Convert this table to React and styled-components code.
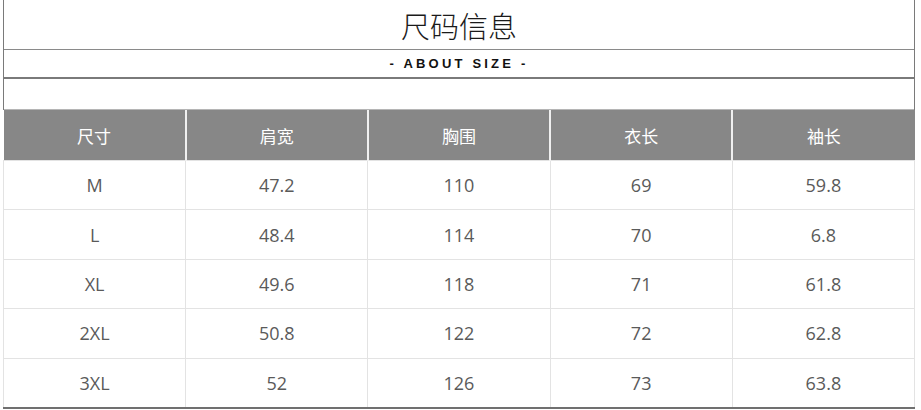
import React from "react";
import styled, { createGlobalStyle } from "styled-components";

const Global = createGlobalStyle`
  html, body { margin: 0; padding: 0; background: #fff; }
  body { font-family: "Open Sans", "Noto Sans CJK SC", sans-serif; }
`;

const Page = styled.div`
  padding-left: 3px;
  width: 912px;
`;

const Box = styled.div`
  border-left: 1px solid #7a7a7a;
  border-right: 1px solid #7a7a7a;
  display: flex;
  flex-direction: column;
`;

const Title = styled.div`
  height: 49px;
  display: flex;
  align-items: center;
  justify-content: center;
  font-family: "Noto Sans CJK SC", sans-serif;
  font-size: 29px;
  font-weight: 300;
  color: #1a1a1a;
  border-bottom: 1px solid #8a8a8a;
`;

const Sub = styled.div`
  height: 27px;
  display: flex;
  align-items: center;
  justify-content: center;
  font-family: "Liberation Sans", Arial, sans-serif;
  font-size: 13px;
  font-weight: 700;
  letter-spacing: 3.2px;
  color: #111;
  border-bottom: 2px solid #7a7a7a;
`;

const Blank = styled.div`
  height: 30px;
  border-bottom: 1px solid #b5b5b5;
`;

const Table = styled.table`
  width: 912px;
  border-collapse: collapse;
  table-layout: fixed;
  border-bottom: 2px solid #707070;
`;

const Th = styled.th`
  height: 50px;
  padding: 0;
  background: #878787;
  color: #fff;
  font-family: "Noto Sans CJK SC", sans-serif;
  font-weight: 400;
  font-size: 17px;
  border-left: 2px solid #f0f0f0;
  &:first-child { border-left: none; }
`;

const Td = styled.td`
  height: 48.4px;
  padding: 0;
  text-align: center;
  color: #5a5a5a;
  font-size: 18px;
  border: 1px solid #e3e3e3;
`;

const head = ["尺寸", "肩宽", "胸围", "衣长", "袖长"];
const rows = [
  ["M", "47.2", "110", "69", "59.8"],
  ["L", "48.4", "114", "70", "6.8"],
  ["XL", "49.6", "118", "71", "61.8"],
  ["2XL", "50.8", "122", "72", "62.8"],
  ["3XL", "52", "126", "73", "63.8"],
];

export default function App() {
  return (
    <Page>
      <Global />
      <Box>
        <Title>尺码信息</Title>
        <Sub>- ABOUT SIZE -</Sub>
        <Blank />
      </Box>
      <Table>
        <thead>
          <tr>
            {head.map((h) => (
              <Th key={h}>{h}</Th>
            ))}
          </tr>
        </thead>
        <tbody>
          {rows.map((r) => (
            <tr key={r[0]}>
              {r.map((c, i) => (
                <Td key={i}>{c}</Td>
              ))}
            </tr>
          ))}
        </tbody>
      </Table>
    </Page>
  );
}
